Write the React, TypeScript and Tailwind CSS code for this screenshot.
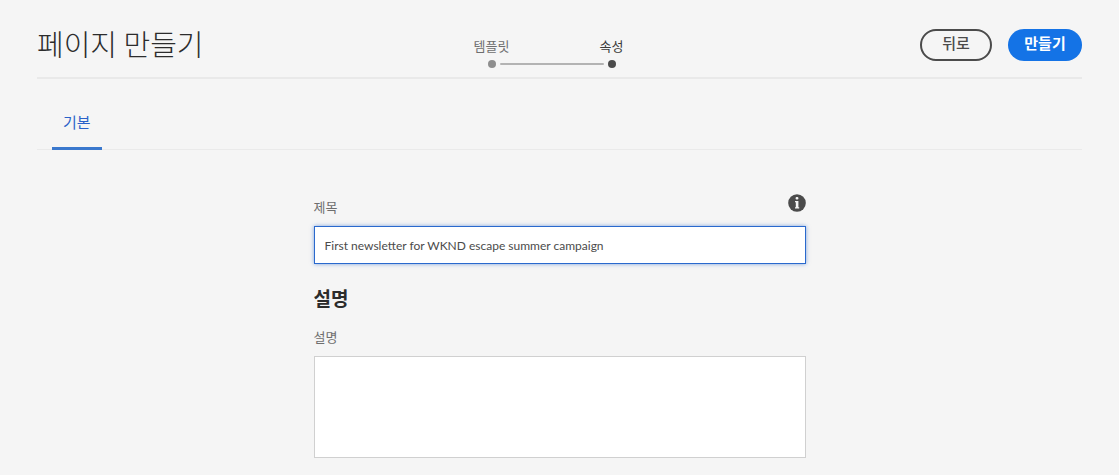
import { useState } from "react";

const steps = [
  { label: "템플릿", current: false },
  { label: "속성", current: true },
];

function InfoIcon() {
  return (
    <svg viewBox="0 0 18 18" className="size-[18px]" aria-hidden="true">
      <circle cx="9" cy="9" r="8.8" fill="#4b4b4b" />
      <rect x="7.6" y="3" width="2.8" height="2.6" rx="1" fill="#f5f5f5" />
      <path d="M7 7h3.4v6.2h.8v1.4H7v-1.4h.8V8.2H7z" fill="#f5f5f5" />
    </svg>
  );
}

export default function App() {
  const [title, setTitle] = useState("First newsletter for WKND escape summer campaign");
  const [description, setDescription] = useState("");

  return (
    <main className="min-h-screen bg-[#f5f5f5] px-[37px] pb-4 font-['Noto_Sans_CJK_KR',sans-serif] text-[#4b4b4b]">
      <header className="grid h-[79px] grid-cols-[1fr_auto_1fr] items-center border-b-2 border-[#e9e9e9] pt-3">
        <h1 className="pb-1 text-[29px] leading-8 font-light text-[#2c2c2c]">페이지 만들기</h1>
        <ol className="mr-4 flex self-end pb-[9px]">
          {steps.map((step) => (
            <li
              key={step.label}
              aria-current={step.current ? "step" : undefined}
              className="group relative flex w-[120px] flex-col items-center gap-1.5 text-[13px] leading-4 text-[#6e6e6e] aria-[current=step]:text-[#3a3a3a]"
            >
              {step.label}
              <span className="size-2 rounded-full bg-[#8e8e8e] group-aria-[current=step]:bg-[#4b4b4b]" />
              {!step.current && (
                <span className="absolute bottom-[3px] left-[68px] h-0.5 w-[104px] rounded-full bg-[#b3b3b3]" />
              )}
            </li>
          ))}
        </ol>
        <div className="flex justify-end gap-4">
          <button type="button" className="h-8 min-w-[72px] rounded-full border-2 border-[#4b4b4b] px-4 pb-1 text-[15px] leading-none font-medium">
            뒤로
          </button>
          <button type="button" className="h-8 min-w-[74px] rounded-full bg-[#1473e6] px-4 pb-1 text-[15px] leading-none font-bold text-white">
            만들기
          </button>
        </div>
      </header>

      <nav className="flex h-[71px] items-end border-b border-[#eaeaea] pl-[15px]">
        <a href="#basic" className="-mb-px border-b-3 border-[#3a78cd] px-[11px] pb-[15px] text-[15px] leading-5 text-[#2a62c9]">
          기본
        </a>
      </nav>

      <form id="basic" className="mx-auto flex w-full max-w-[492px] flex-col pt-11">
        <div className="flex h-8 items-start justify-between">
          <label htmlFor="title" className="pt-[3px] text-[13px] leading-5 text-[#6e6e6e]">
            제목
          </label>
          <button type="button" aria-label="정보">
            <InfoIcon />
          </button>
        </div>
        <input
          id="title"
          value={title}
          onChange={(e) => setTitle(e.target.value)}
          className="h-[38px] border border-[#2a69cd] bg-white px-2.5 font-[Lato,'Noto_Sans_CJK_KR',sans-serif] text-xs text-[#4b4b4b] shadow-[0_0_4px_#2a69cd99] outline-none"
        />
        <h2 className="mt-5 text-[19px] leading-7 font-bold text-[#2c2c2c]">설명</h2>
        <label htmlFor="description" className="mt-[15px] mb-[9px] text-[13px] leading-5 text-[#6e6e6e]">
          설명
        </label>
        <textarea
          id="description"
          value={description}
          onChange={(e) => setDescription(e.target.value)}
          className="h-[102px] resize-none border border-[#d0d0d0] bg-white p-2.5 text-xs outline-none"
        />
      </form>
    </main>
  );
}
